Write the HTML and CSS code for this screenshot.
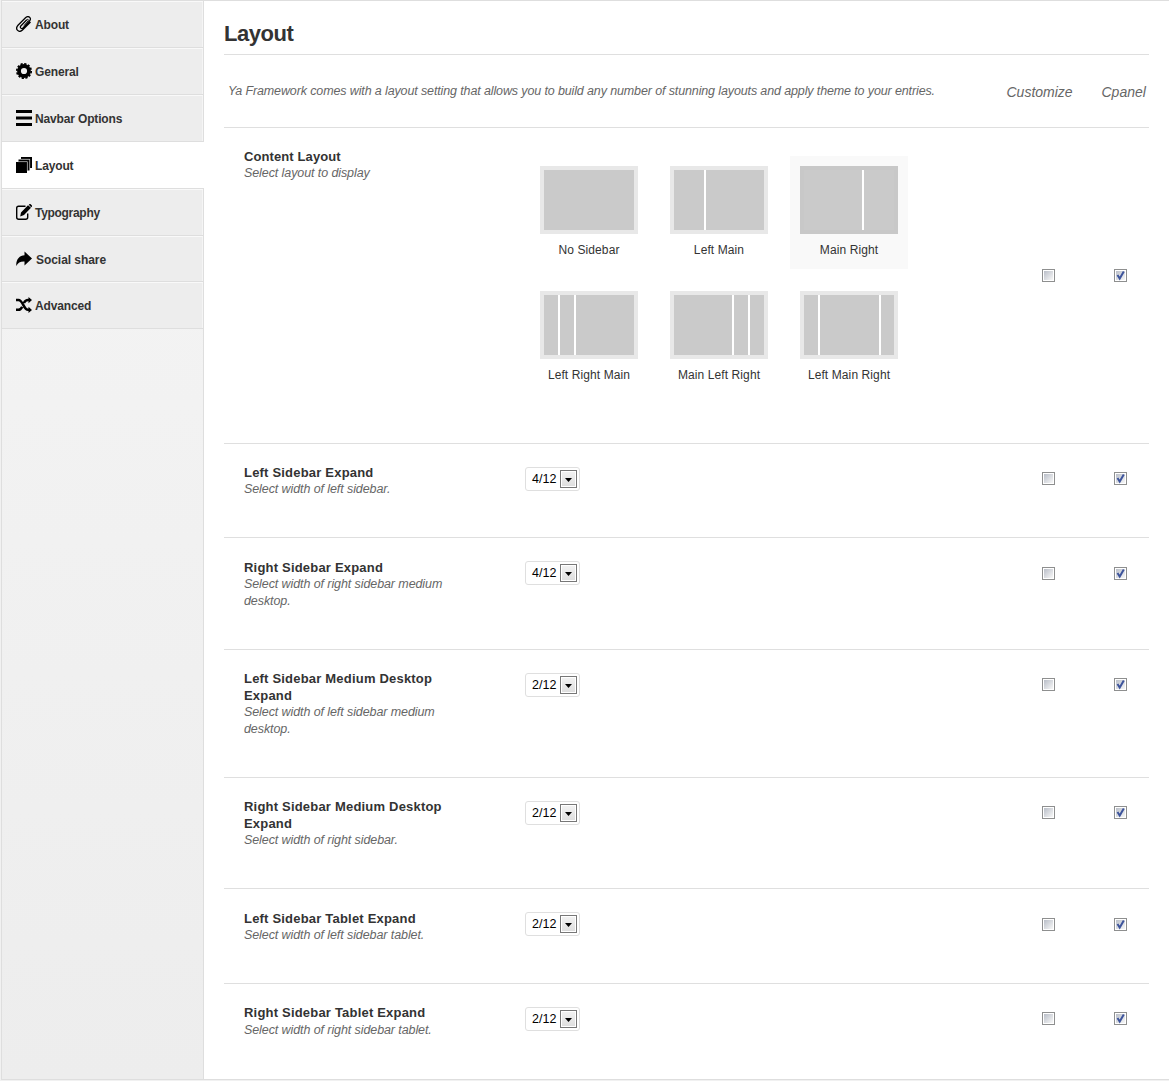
FILE: index.html
```html
<!DOCTYPE html>
<html lang="en">
<head>
<meta charset="utf-8">
<title>Layout</title>
<link rel="stylesheet" href="styles.css">
</head>
<body>
<div class="panel">
  <nav class="sidebar">
    <a class="item"><svg class="icon" viewBox="0 0 16 16"><path d="M10.800 3.800 4.800 10c-1.400 1.600.8 3.400 2.200 2l6.500-7C16.200 2 12.300-1 9.500 1.800L2 9.300c-3.500 4 1 8 4.500 4.700L14.500 6" fill="none" stroke="#000" stroke-width="1.300"/><path d="M10.800 3.800c1.500-1.200 2 .2 1.200 1.200L8 9.500" fill="none" stroke="#000" stroke-width=".9"/></svg><span>About</span></a>
    <a class="item"><svg class="icon" viewBox="0 0 16 16"><circle cx="8" cy="8" r="5" fill="none" stroke="#000" stroke-width="3.800"/><circle cx="8" cy="8" r="7.200" fill="none" stroke="#000" stroke-width="1.700" stroke-dasharray="2.200 1.570"/></svg><span>General</span></a>
    <a class="item"><svg class="icon" viewBox="0 0 16 16"><path d="M0 0h16v3H0zM0 6.500h16v3H0zM0 13h16v3H0z"/></svg><span>Navbar Options</span></a>
    <a class="item active"><svg class="icon" viewBox="0 0 16 16"><path d="M5 0h11v11h-2V2H5z"/><path d="M2.500 2.500h11v11h-2V4.500h-9z"/><path d="M0 5h11v11H0z"/><path d="M4.500 2.200h9.300v9.300M2 4.700h9.300v9.300" fill="none" stroke="#999" stroke-width=".5"/></svg><span>Layout</span></a>
    <a class="item"><svg class="icon" viewBox="0 0 16 16"><path d="M9.500 2.200H2.500Q.7 2.200.7 4v9.300q0 2 2 2h7q2 0 2-2V9.500" fill="none" stroke="#000" stroke-width="1.400"/><path d="m4.200 12.500.8-4L12 1.200l3 2.600-7 7.200zM12.800.8 13.600 0h.8L16 1.600v.8l-.8.8z"/></svg><span class="tight">Typography</span></a>
    <a class="item short"><svg class="icon" viewBox="0 0 16 16"><path d="M8.500.5 16 7.500l-7.500 7v-4C4.500 10.300 2 11.500.3 15-.2 8.500 3.500 4.500 8.500 4.300z"/></svg><span class="nudge">Social share</span></a>
    <a class="item"><svg class="icon" viewBox="0 0 16 16"><path d="M0 3h2.500C7 3 7.500 12.800 12 12.800h1.500M0 12.800h2.500c1.800 0 2.800-1.300 3.700-3M7.900 6C8.800 4.200 9.900 3 12 3h1.500" fill="none" stroke="#000" stroke-width="2.500"/><path d="m12.500 0 3.500 3-3.500 3.200zM12.500 9.700l3.500 3.200-3.500 3.100z"/></svg><span>Advanced</span></a>
  </nav>
  <main class="content">
    <h1>Layout</h1>
    <div class="intro"><p>Ya Framework comes with a layout setting that allows you to build any number of stunning layouts and apply theme to your entries.</p><span class="head">Customize</span><span class="head">Cpanel</span></div>

    <section class="row layouts">
      <div class="label"><h2>Content Layout</h2><p>Select layout to display</p></div>
      <div class="choices">
        <div class="choice"><div class="thumb"><i></i></div><span>No Sidebar</span></div>
        <div class="choice"><div class="thumb left"><i></i><i></i></div><span>Left Main</span></div>
        <div class="choice selected"><div class="thumb right"><i></i><i></i></div><span>Main Right</span></div>
        <div class="choice"><div class="thumb left-two"><i></i><i></i><i></i></div><span>Left Right Main</span></div>
        <div class="choice"><div class="thumb right-two"><i></i><i></i><i></i></div><span>Main Left Right</span></div>
        <div class="choice"><div class="thumb both"><i></i><i></i><i></i></div><span>Left Main Right</span></div>
      </div>
      <b class="check"></b><b class="check on"><svg viewBox="0 0 13 13"><path d="m3.500 6 2.200 3.500L9.800 2.500"/></svg></b>
    </section>
    <section class="row h94">
      <div class="label"><h2>Left Sidebar Expand</h2><p>Select width of left sidebar.</p></div>
      <div class="select">4/12<span class="arrow"></span></div>
      <b class="check"></b><b class="check on"><svg viewBox="0 0 13 13"><path d="m3.500 6 2.200 3.500L9.800 2.500"/></svg></b>
    </section>
    <section class="row h112 low">
      <div class="label"><h2>Right Sidebar Expand</h2><p>Select width of right sidebar medium desktop.</p></div>
      <div class="select">4/12<span class="arrow"></span></div>
      <b class="check"></b><b class="check on"><svg viewBox="0 0 13 13"><path d="m3.500 6 2.200 3.500L9.800 2.500"/></svg></b>
    </section>
    <section class="row h128">
      <div class="label"><h2>Left Sidebar Medium Desktop Expand</h2><p>Select width of left sidebar medium desktop.</p></div>
      <div class="select">2/12<span class="arrow"></span></div>
      <b class="check"></b><b class="check on"><svg viewBox="0 0 13 13"><path d="m3.500 6 2.200 3.500L9.800 2.500"/></svg></b>
    </section>
    <section class="row h111">
      <div class="label"><h2>Right Sidebar Medium Desktop Expand</h2><p>Select width of right sidebar.</p></div>
      <div class="select">2/12<span class="arrow"></span></div>
      <b class="check"></b><b class="check on"><svg viewBox="0 0 13 13"><path d="m3.500 6 2.200 3.500L9.800 2.500"/></svg></b>
    </section>
    <section class="row h95 low">
      <div class="label"><h2>Left Sidebar Tablet Expand</h2><p>Select width of left sidebar tablet.</p></div>
      <div class="select">2/12<span class="arrow"></span></div>
      <b class="check"></b><b class="check on"><svg viewBox="0 0 13 13"><path d="m3.500 6 2.200 3.500L9.800 2.500"/></svg></b>
    </section>
    <section class="row last">
      <div class="label"><h2>Right Sidebar Tablet Expand</h2><p>Select width of right sidebar tablet.</p></div>
      <div class="select">2/12<span class="arrow"></span></div>
      <b class="check"></b><b class="check on"><svg viewBox="0 0 13 13"><path d="m3.500 6 2.200 3.500L9.800 2.500"/></svg></b>
    </section>
  </main>
</div>
</body>
</html>
```
FILE: styles.css
```css
* { box-sizing: border-box; }
body { margin: 0; background: #f1f1f1; color: #333; font-family: "Liberation Sans", Arial, sans-serif; overflow: hidden; }
h1, h2, p { margin: 0; }
.panel { display: flex; height: 1080px; margin-left: 1px; border: solid #dedede; border-width: 1px 0 1px 1px; background: #fff; }
.sidebar { width: 202px; flex: none; background: linear-gradient(#f5f5f5, #ededed); box-shadow: inset -1px 0 #dedede; }
.item { display: flex; align-items: center; height: 47px; width: 201px; padding: 0 0 0 14px; background: #ededed; border: solid #dedede; border-width: 0 0 1px; box-shadow: inset 0 1px #f9f9f9, inset -1px 0 #f5f5f5; font-size: 12px; font-weight: bold; letter-spacing: -.15px; color: #333; }
.item span { padding-top: 2px; }
.item.short { height: 46px; padding-top: 1px; }
.item.active { width: 202px; background: #fff; box-shadow: none; }
.item .nudge { margin-left: 1px; letter-spacing: -.05px; }
.item .tight { letter-spacing: -.3px; }
.icon { width: 16px; height: 16px; margin-right: 3px; }
.content { flex: 1; padding: 0 20px; }
h1 { height: 54px; padding-top: 19px; border-bottom: 1px solid #dfdfdf; font-size: 22px; line-height: 28px; letter-spacing: -.45px; }
.intro { display: flex; height: 73px; padding: 28px 2px 0 4px; border-bottom: 1px solid #dfdfdf; font-size: 12.5px; font-style: italic; line-height: 16px; letter-spacing: -.125px; color: #666; }
.intro p { width: 778.5px; white-space: nowrap; }
.head { width: 95px; font-size: 14px; line-height: 19px; letter-spacing: 0; white-space: nowrap; }
.head + .head { width: auto; }
.row { display: grid; grid-template-columns: 281px 517px 72px 13px; align-items: start; padding: 20px 0 0 20px; border-bottom: 1px solid #dfdfdf; }
.label { width: 208px; }
.label h2 { font-size: 13px; line-height: 17px; letter-spacing: .2px; }
.label p { font-size: 12.5px; font-style: italic; line-height: 17px; letter-spacing: -.09px; color: #666; }
.low > .label { padding-top: 1px; }
.h94 { height: 94px; }
.h95 { height: 95px; }
.h111 { height: 111px; }
.h112 { height: 112px; }
.h128 { height: 128px; }
.last { height: 95px; border: 0; }
.last h2 { margin-bottom: 1px; }
.layouts { height: 316px; }
.layouts h2 { letter-spacing: .1px; }
.choices { display: grid; grid-template-columns: repeat(3, 118px); gap: 12px; margin: 8px 0 0 5px; }
.choice { height: 113px; padding: 10px; text-align: center; font-size: 12px; line-height: 16px; letter-spacing: .1px; white-space: nowrap; }
.choice.selected { background: #f9f9f9; }
.thumb { display: grid; gap: 2px; width: 98px; height: 68px; margin-bottom: 8px; border: 4px solid #e8e8e8; background: #fff; }
.thumb i { background: #cacaca; }
.selected .thumb { border-color: #c8c8c8; }
.left { grid-template-columns: 30px 58px; }
.right { grid-template-columns: 58px 30px; }
.left-two { grid-template-columns: 14px 14px 58px; }
.right-two { grid-template-columns: 58px 14px 14px; }
.both { grid-template-columns: 14px 59px 13px; }
.select { display: flex; align-items: center; justify-content: space-between; width: 55px; height: 24px; margin-top: 3px; padding: 0 2px 0 6px; border: 1px solid #dfdfdf; border-radius: 3px; font-size: 12.5px; color: #000; }
.arrow { display: flex; align-items: center; justify-content: center; width: 17px; height: 18px; border: 1px solid #777; background: linear-gradient(#f3f3f3, #ddd); box-shadow: inset 0 0 0 1px #fff; }
.arrow::after { content: ""; width: 7px; height: 4px; margin-top: 2px; background: #000; clip-path: polygon(0 0, 100% 0, 50% 100%); }
.check { width: 13px; height: 13px; margin-top: 8px; border: 1px solid #8e8f8f; background: linear-gradient(135deg, #b9bec8, #f8f8f8) content-box #f4f4f4; padding: 1px; }
.check svg { display: block; width: 13px; height: 13px; margin: -2px; }
.check path { fill: none; stroke: #3d549c; stroke-width: 2; }
.low > .check { margin-top: 9px; }
.layouts > .check { margin-top: 121px; }
```
